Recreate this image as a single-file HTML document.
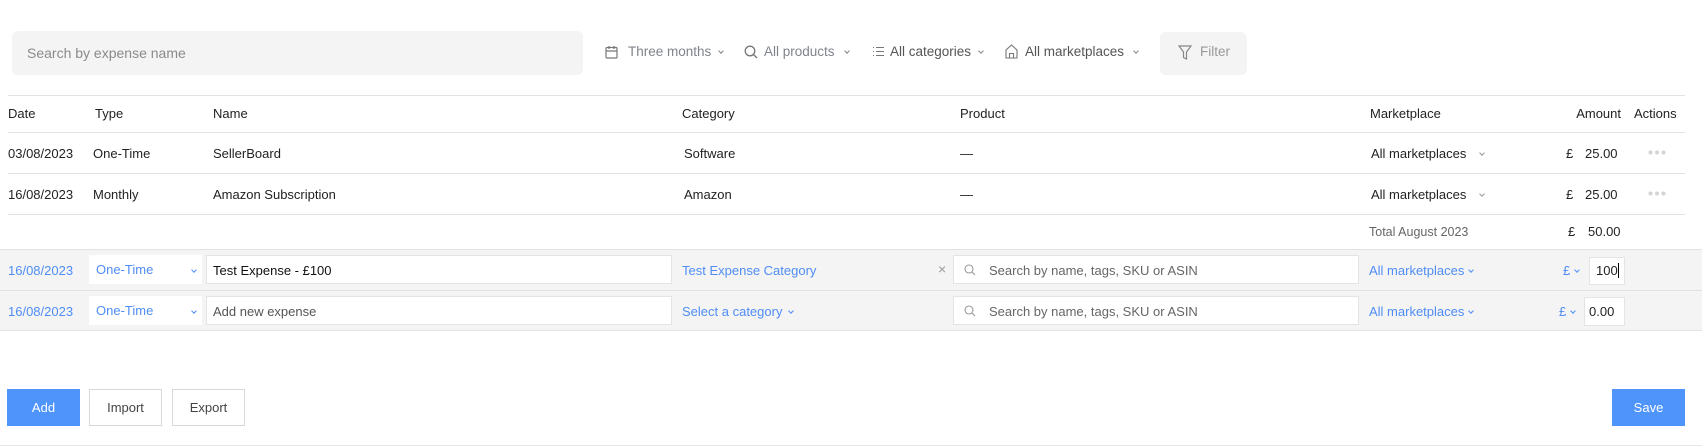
<!DOCTYPE html>
<html><head><meta charset="utf-8"><style>
*{box-sizing:border-box;margin:0;padding:0}
body{width:1702px;height:447px;background:#fff;font-family:"Liberation Sans",sans-serif;font-size:13px;color:#222;position:relative;overflow:hidden}
.a{position:absolute;white-space:nowrap}
.line{position:absolute;left:8px;width:1677px;height:1px;background:#e2e2e2}
.g{color:#777}
.b{color:#4f8df5}
.chev{display:inline-block;width:5px;height:5px;border-right:1px solid currentColor;border-bottom:1px solid currentColor;transform:rotate(45deg);margin-left:6px;position:relative;top:-3px}
.inp{position:absolute;background:#fff;border:1px solid #e4e4e4}
.btn{position:absolute;top:389px;height:37px;border:1px solid #d8d8d8;background:#fff;text-align:center;line-height:35px;font-size:13px;color:#444}
</style></head><body>
<div class="a" style="left:12px;top:31px;width:571px;height:44px;background:#f4f4f4;border-radius:6px"></div>
<div class="a g" style="left:27px;top:45px;font-size:14px;color:#8a8a8a">Search by expense name</div>

<svg class="a" style="left:605px;top:45px" width="13" height="14" viewBox="0 0 13 14" fill="none" stroke="#777" stroke-width="1.2"><rect x="1" y="2.5" width="11" height="10.5" rx="1"/><path d="M1 6h11M4 1v3M9 1v3"/></svg>
<div class="a g" style="left:628px;top:44px;font-size:13.5px;color:#7f848b">Three months<span class="chev" style="margin-left:8px;width:4px;height:4px"></span></div>
<svg class="a" style="left:744px;top:45px" width="14" height="14" viewBox="0 0 14 14" fill="none" stroke="#777" stroke-width="1.3"><circle cx="6" cy="6" r="4.8"/><path d="M9.5 9.5l3.5 3.5"/></svg>
<div class="a" style="left:764px;top:44px;font-size:13.5px;color:#7f848b">All products<span class="chev" style="margin-left:10px;width:4px;height:4px"></span></div>
<svg class="a" style="left:872px;top:46px" width="13" height="11" viewBox="0 0 13 11" fill="none" stroke="#777" stroke-width="1"><path d="M1 1.5h1M1 5.5h1M1 9.5h1M4 1.5h8M4 5.5h8M4 9.5h8"/></svg>
<div class="a" style="left:890px;top:44px;font-size:13.5px;color:#555">All categories<span class="chev" style="margin-left:8px;width:4px;height:4px;color:#888"></span></div>
<svg class="a" style="left:1005px;top:44px" width="13" height="15" viewBox="0 0 13 15" fill="none" stroke="#777" stroke-width="1.1"><path d="M1 14V6l5.5-5L12 6v8zM4.5 14V9.5h4V14"/></svg>
<div class="a" style="left:1025px;top:44px;font-size:13.5px;color:#555">All marketplaces<span class="chev" style="margin-left:10px;width:4px;height:4px;color:#888"></span></div>
<div class="a" style="left:1160px;top:32px;width:87px;height:43px;background:#f4f4f4;border-radius:6px"></div>
<svg class="a" style="left:1178px;top:45px" width="14" height="15" viewBox="0 0 14 15" fill="none" stroke="#888" stroke-width="1.2"><path d="M1 1h12L8.5 7v7L5.5 12.5V7z"/></svg>
<div class="a" style="left:1200px;top:44px;font-size:13.5px;color:#999">Filter</div>

<div class="line" style="top:95px"></div>
<div class="a" style="left:8px;top:106px">Date</div>
<div class="a" style="left:95px;top:106px">Type</div>
<div class="a" style="left:213px;top:106px">Name</div>
<div class="a" style="left:682px;top:106px">Category</div>
<div class="a" style="left:960px;top:106px">Product</div>
<div class="a" style="left:1370px;top:106px">Marketplace</div>
<div class="a" style="left:1570px;top:106px;width:51px;text-align:right">Amount</div>
<div class="a" style="left:1634px;top:106px">Actions</div>
<div class="line" style="top:132px"></div>

<div class="a" style="left:8px;top:146px">03/08/2023</div>
<div class="a" style="left:93px;top:146px">One-Time</div>
<div class="a" style="left:213px;top:146px">SellerBoard</div>
<div class="a" style="left:684px;top:146px">Software</div>
<div class="a" style="left:960px;top:146px">—</div>
<div class="a" style="left:1371px;top:146px">All marketplaces<span class="chev" style="margin-left:14px;width:4px;height:4px;color:#999"></span></div>
<div class="a" style="left:1566px;top:146px">£</div>
<div class="a" style="left:1585px;top:146px">25.00</div>
<svg class="a" style="left:1648px;top:150px" width="18" height="5"><circle cx="2.5" cy="2.5" r="2" fill="#d4d4d4"/><circle cx="9" cy="2.5" r="2" fill="#d4d4d4"/><circle cx="15.5" cy="2.5" r="2" fill="#d4d4d4"/></svg>
<div class="line" style="top:173px"></div>

<div class="a" style="left:8px;top:187px">16/08/2023</div>
<div class="a" style="left:93px;top:187px">Monthly</div>
<div class="a" style="left:213px;top:187px">Amazon Subscription</div>
<div class="a" style="left:684px;top:187px">Amazon</div>
<div class="a" style="left:960px;top:187px">—</div>
<div class="a" style="left:1371px;top:187px">All marketplaces<span class="chev" style="margin-left:14px;width:4px;height:4px;color:#999"></span></div>
<div class="a" style="left:1566px;top:187px">£</div>
<div class="a" style="left:1585px;top:187px">25.00</div>
<svg class="a" style="left:1648px;top:191px" width="18" height="5"><circle cx="2.5" cy="2.5" r="2" fill="#d4d4d4"/><circle cx="9" cy="2.5" r="2" fill="#d4d4d4"/><circle cx="15.5" cy="2.5" r="2" fill="#d4d4d4"/></svg>
<div class="line" style="top:214px"></div>

<div class="a g" style="left:1369px;top:225px;font-size:12.5px;color:#666">Total August 2023</div>
<div class="a" style="left:1568px;top:224px">£</div>
<div class="a" style="left:1588px;top:224px">50.00</div>

<div class="a" style="left:0;top:249px;width:1702px;height:41px;background:#f4f4f4;border-top:1px solid #e2e2e2"></div>
<div class="a" style="left:0;top:290px;width:1702px;height:41px;background:#f4f4f4;border-top:1px solid #e2e2e2;border-bottom:1px solid #e2e2e2"></div>

<div class="a b" style="left:8px;top:263px">16/08/2023</div>
<div class="a" style="left:89px;top:255px;width:113px;height:29px;background:#fff"></div>
<div class="a b" style="left:96px;top:262px">One-Time</div>
<div class="a b" style="left:186px;top:263px"><span class="chev" style="width:4px;height:4px"></span></div>
<div class="inp" style="left:206px;top:255px;width:466px;height:29px"></div>
<div class="a" style="left:213px;top:263px;color:#111">Test Expense - £100</div>
<div class="a b" style="left:682px;top:263px">Test Expense Category</div>
<div class="a" style="left:938px;top:261px;color:#999;font-size:14px">×</div>
<div class="inp" style="left:953px;top:255px;width:406px;height:29px"></div>
<svg class="a" style="left:964px;top:264px" width="12" height="12" viewBox="0 0 12 12" fill="none" stroke="#999" stroke-width="1.1"><circle cx="5" cy="5" r="4"/><path d="M8 8l3 3"/></svg>
<div class="a" style="left:989px;top:263px;color:#666">Search by name, tags, SKU or ASIN</div>
<div class="a b" style="left:1369px;top:263px">All marketplaces<span class="chev" style="margin-left:5px;width:4px;height:4px"></span></div>
<div class="a b" style="left:1563px;top:263px">£<span class="chev" style="margin-left:5px;width:4px;height:4px"></span></div>
<div class="inp" style="left:1589px;top:257px;width:36px;height:28px"></div>
<div class="a" style="left:1596px;top:263px">100<span style="display:inline-block;width:1px;height:15px;background:#000;vertical-align:-3px"></span></div>

<div class="a b" style="left:8px;top:304px">16/08/2023</div>
<div class="a" style="left:89px;top:296px;width:113px;height:29px;background:#fff"></div>
<div class="a b" style="left:96px;top:303px">One-Time</div>
<div class="a b" style="left:186px;top:304px"><span class="chev" style="width:4px;height:4px"></span></div>
<div class="inp" style="left:206px;top:296px;width:466px;height:29px"></div>
<div class="a" style="left:213px;top:304px;color:#555">Add new expense</div>
<div class="a b" style="left:682px;top:304px">Select a category<span class="chev" style="margin-left:7px;width:4px;height:4px"></span></div>
<div class="inp" style="left:953px;top:296px;width:406px;height:29px"></div>
<svg class="a" style="left:964px;top:305px" width="12" height="12" viewBox="0 0 12 12" fill="none" stroke="#999" stroke-width="1.1"><circle cx="5" cy="5" r="4"/><path d="M8 8l3 3"/></svg>
<div class="a" style="left:989px;top:304px;color:#666">Search by name, tags, SKU or ASIN</div>
<div class="a b" style="left:1369px;top:304px">All marketplaces<span class="chev" style="margin-left:5px;width:4px;height:4px"></span></div>
<div class="a b" style="left:1559px;top:304px">£<span class="chev" style="margin-left:5px;width:4px;height:4px"></span></div>
<div class="inp" style="left:1584px;top:297px;width:41px;height:29px"></div>
<div class="a" style="left:1589px;top:304px">0.00</div>

<div class="btn" style="left:7px;width:73px;background:#4f94fb;border-color:#4f94fb;color:#fff">Add</div>
<div class="btn" style="left:89px;width:73px">Import</div>
<div class="btn" style="left:172px;width:73px">Export</div>
<div class="btn" style="left:1612px;width:73px;background:#4f94fb;border-color:#4f94fb;color:#fff">Save</div>
<div class="a" style="left:0;top:445px;width:1702px;height:1px;background:#e6e6e6"></div>
</body></html>
